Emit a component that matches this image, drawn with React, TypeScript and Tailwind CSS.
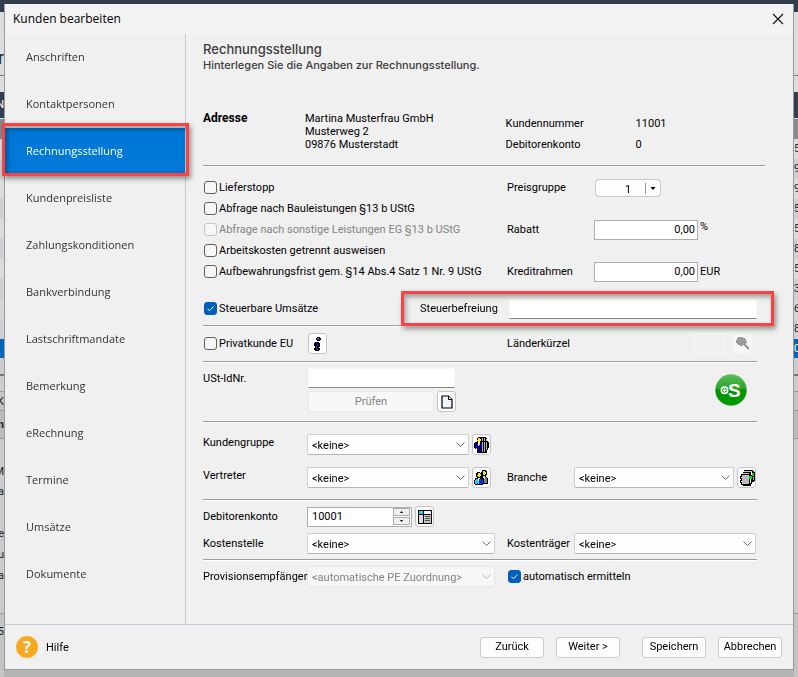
import { useState, type ReactNode } from "react";
import clsx from "clsx";

const navItems = [
    "Anschriften",
    "Kontaktpersonen",
    "Rechnungsstellung",
    "Kundenpreisliste",
    "Zahlungskonditionen",
    "Bankverbindung",
    "Lastschriftmandate",
    "Bemerkung",
    "eRechnung",
    "Termine",
    "Umsätze",
    "Dokumente",
];

const flags = [
    { label: "Lieferstopp" },
    { label: "Abfrage nach Bauleistungen §13 b UStG" },
    { label: "Abfrage nach sonstige Leistungen EG §13 b UStG", disabled: true },
    { label: "Arbeitskosten getrennt ausweisen" },
    { label: "Aufbewahrungsfrist gem. §14 Abs.4 Satz 1 Nr. 9 UStG" },
];

// rows of the list window behind the dialog
const backdropRows = [
    { cls: "h-3 bg-[#323e4d]", left: "", right: "" },
    { cls: "h-16 bg-[#dcdcdc] border-b border-[#777] text-lg leading-[92px]", left: "r", right: "" },
    { cls: "h-4 bg-[#dcdcdc]", left: "", right: "" },
    { cls: "h-[26px] bg-[#323e4d] text-white leading-[26px]", left: "N", right: "" },
    { cls: "h-[21px] bg-[#87888d] border-t border-[#ddd]", left: "", right: "" },
    { cls: "h-5 bg-[#dcdcdc]", left: "", right: "5" },
    { cls: "h-5 bg-[#cfcfd3]", left: "", right: "9" },
    { cls: "h-5 bg-[#dcdcdc]", left: "", right: "9" },
    { cls: "h-5 bg-[#cfcfd3]", left: "", right: "5" },
    { cls: "h-5 bg-[#dcdcdc]", left: "", right: "5" },
    { cls: "h-5 bg-[#cfcfd3]", left: "", right: "8" },
    { cls: "h-5 bg-[#dcdcdc]", left: "", right: "5" },
    { cls: "h-5 bg-[#cfcfd3]", left: "", right: "3" },
    { cls: "h-5 bg-[#d6d6d6]", left: "", right: "6" },
    { cls: "h-5 bg-[#cfcfd3]", left: "", right: "8" },
    { cls: "h-[19px] bg-[#0067b8] text-white", left: "", right: "0" },
    { cls: "h-[18px] bg-[#cdcdcd] border-b-2 border-[#777]", left: "", right: "" },
    { cls: "h-[15px] bg-[#cdcdcd]", left: "", right: "" },
    { cls: "h-5 bg-[#c4c4c4] border-y border-[#999]", left: "K", right: "" },
    { cls: "h-7 bg-[#bcbcbc] border-b border-[#999] leading-7 font-bold", left: "n", right: "" },
    { cls: "h-[23px] bg-[#cbcbcb]", left: "", right: "" },
    { cls: "h-5 bg-[#cbcbcb]", left: "M", right: "" },
    { cls: "h-[42px] bg-[#cbcbcb]", left: "a", right: "" },
    { cls: "h-[21px] bg-[#cbcbcb]", left: "e", right: "" },
    { cls: "h-[21px] bg-[#cbcbcb]", left: "u", right: "" },
    { cls: "h-12 bg-[#cbcbcb] border-b border-[#999]", left: "a", right: "" },
    { cls: "grow bg-[#c4c4c4] leading-9", left: "5", right: "" },
];

function Backdrop({ side }: { side: "left" | "right" }) {
    return (
        <div aria-hidden="true" className="flex w-1 shrink-0 flex-col overflow-hidden text-[11px] leading-5 text-[#222]">
            {backdropRows.map((row, i) => (
                <div key={i} className={clsx("flex shrink-0 overflow-hidden", side === "left" && "justify-end", row.cls)}>
                    {row[side]}
                </div>
            ))}
        </div>
    );
}

function Marker({ className }: { className: string }) {
    return (
        <div
            className={clsx(
                "pointer-events-none absolute border-3 border-[#fb4141] shadow-[2px_3px_5px_rgba(0,0,0,0.4),inset_2px_3px_5px_rgba(0,0,0,0.35)]",
                className
            )}
        />
    );
}

function Separator({ className }: { className?: string }) {
    return <div className={clsx("h-[2px] border-t border-[#9d9d9d] bg-white", className)} />;
}

function Check({ label, disabled, checked }: { label: string; disabled?: boolean; checked?: boolean }) {
    const [on, setOn] = useState(!!checked);
    return (
        <label className={clsx("flex h-[21px] items-center gap-[2px] leading-[19px] whitespace-nowrap", disabled && "text-[#838383]")}>
            <span className="relative flex">
                <input
                    type="checkbox"
                    checked={on}
                    disabled={disabled}
                    onChange={() => setOn(!on)}
                    className="size-[13px] appearance-none rounded-[3px] border border-[#5f5f5f] bg-[#f7f7f7] checked:border-[#005fb8] checked:bg-[#005fb8] disabled:border-[#c3c3c3]"
                />
                {on && (
                    <svg viewBox="0 0 13 13" className="pointer-events-none absolute inset-0 size-[13px]">
                        <path d="M3.5 6.7l2 2 4-4" fill="none" stroke="#fff" strokeWidth="1" />
                    </svg>
                )}
            </span>
            {label}
        </label>
    );
}

function Select({ id, value, disabled, className }: { id: string; value: string; disabled?: boolean; className?: string }) {
    return (
        <div className={clsx("relative min-w-0", className)}>
            <select
                id={id}
                disabled={disabled}
                className="h-[21px] w-full appearance-none rounded-[2px] border border-[#cfcfcf] border-b-[#b5b5b5] bg-[#fdfdfd] pt-[1px] pl-1 text-black disabled:border-[#e6e6e6] disabled:bg-[#f7f7f7] disabled:text-[#838383] disabled:opacity-100"
            >
                <option>{value}</option>
            </select>
            <svg viewBox="0 0 9 5" className="pointer-events-none absolute top-2 right-1 h-[5px] w-[9px]">
                <path d="M.5 .5l4 4 4-4" fill="none" stroke={disabled ? "#b5b5b5" : "#6b6b6b"} strokeWidth="1" />
            </svg>
        </div>
    );
}

function IconButton({ label, disabled, children }: { label: string; disabled?: boolean; children: ReactNode }) {
    return (
        <button
            type="button"
            aria-label={label}
            disabled={disabled}
            className="flex h-[21px] w-[19px] shrink-0 items-center justify-center rounded-[3px] border border-[#c4c4c4] bg-[#fdfdfd] disabled:border-[#f4f4f4] disabled:bg-[#f6f6f6]"
        >
            {children}
        </button>
    );
}

function InfoIcon() {
    return (
        <svg viewBox="0 0 7 14" className="h-[14px] w-[7px]" shapeRendering="crispEdges">
            <path d="M3 0h3v1h1v2h-1v1h-3v-1h-1v-2h1zM1 5h4v1h1v4h-1v1h1v2h-1v1h-4v-1h-1v-2h1v-2h-1v-3h1z" fill="#000" />
            <path d="M3 1h2v2h-2zM2 6h1v1h-1zM3 7h1v2h-1zM2 9h1v3h-1zM3 12h1v1h-1z" fill="#2134d8" />
            <path d="M4 1h1v1h-1z" fill="#2ba7a0" />
        </svg>
    );
}

function PageIcon() {
    return (
        <svg viewBox="0 0 12 14" className="h-[14px] w-3">
            <path d="M1 1h6.500l3.500 3.500v8.500h-10z" fill="#eef4fc" stroke="#000" strokeWidth="1.200" />
            <path d="M7.500 1v3.500h3.500" fill="#fff" stroke="#000" strokeWidth="1" />
        </svg>
    );
}

function SearchIcon() {
    return (
        <svg viewBox="0 0 13 13" className="size-[13px]" fill="#9b9b9b" shapeRendering="crispEdges">
            <path d="M4 0h3v1h2v1h1v2h1v2h-1v2h1v1h1v1h1v3h-1v-1h-1v-1h-1v-1h-1v-1h-1v-1h-1v1h-3v-1h-2v-1h-1v-1h-1v-3h1v-2h1v-1h2z" />
        </svg>
    );
}

function GroupIcon() {
    return (
        <svg viewBox="0 0 15 16" className="h-4 w-[15px]" shapeRendering="crispEdges">
            <path d="M4 0h8v1h1v3h1v1h1v6h-1v2h-1v3h-10v-4h-2v-1h-1v-5h1v-1h2v-4h1z" fill="#000" />
            <path d="M8 1h1v14h-1zM10 1h1v14h-1zM12 2h1v11h-1z" fill="#b4b4b4" />
            <path d="M8 4h5v1h-5z" fill="#000" />
            <path d="M4 1h2v1h1v2h-1v1h-2v-1h-1v-1h1z" fill="#ffee00" />
            <path d="M1 6h7v5h-1v4h-3v-4h-3z" fill="#00008b" />
            <path d="M4 5h2v2h-1v2h-1z" fill="#fff" />
            <path d="M5 6h1v2h-1zM2 11h1v1h-1z" fill="#ffee00" />
        </svg>
    );
}

function PeopleIcon() {
    return (
        <svg viewBox="0 0 15 15" className="size-[15px]" shapeRendering="crispEdges">
            <path d="M8 0h4v1h1v4h-1v2h1v1h1v6h-5v1h-8v-1h-1v-4h1v-2h2v-1h-1v-4h1v-1h3v1h1v-1h1z" fill="#000" />
            <path d="M9 1h2v1h1v2h-1v1h-2zM4 3h2v1h1v2h-1v1h-2v-1h-1v-1h1z" fill="#ffe815" />
            <path d="M10 7h2v1h1v5h-3z" fill="#7c7c7c" />
            <path d="M9 6h2v3h-1z" fill="#ddd" />
            <path d="M2 9h6v1h1v4h-7z" fill="#0b2ee0" />
            <path d="M2 9h2v2h1v3h-1v-1h-1v1h-2v-4h1z" fill="#20d9ee" />
            <path d="M4 8h2v1h-1v2h-1z" fill="#fff" />
        </svg>
    );
}

function BooksIcon() {
    return (
        <svg viewBox="0 0 16 16" className="size-4" shapeRendering="crispEdges">
            <path d="M5 0h9v1h1v1h1v9h-1v1h-2v2h-1v2h-8v-1h-2v-1h-1v-8h1v-2h2v-2h1z" fill="#000" />
            <path d="M5 1h8v1h-8zM4 3h6v1h-6z" fill="#c8c8c8" />
            <path d="M3 5h7v9h-7z" fill="#bdbdbd" />
            <path d="M1 5h1v1h-1zM2 7h1v1h-1zM1 9h1v1h-1zM2 11h1v1h-1zM1 13h1v1h-1z" fill="#fff" />
            <path d="M11 9h1v4h-1zM12 2h1v3h-1z" fill="#fff" />
            <path d="M13 3h2v3h-2zM10 6h3v3h-3z" fill="#00e01a" />
            <path d="M14 7h1v3h-1z" fill="#bbb" />
        </svg>
    );
}

function TableIcon() {
    return (
        <svg viewBox="0 0 14 14" className="size-[14px]" shapeRendering="crispEdges">
            <path d="M0 0h14v14h-14z" fill="#000" />
            <path d="M1 1h4v3h-4z" fill="#14dff0" />
            <path d="M6 1h7v3h-7z" fill="#fff" />
            <path d="M1 5h4v8h-4z" fill="#ddd" />
            <path d="M6 5h7v8h-7z" fill="#c4c4c4" />
            <path d="M7 6h5v1h-5zM7 8h5v1h-5zM7 10h5v1h-5z" fill="#555" />
        </svg>
    );
}

function PlusSIcon() {
    return (
        <svg viewBox="0 0 32 32" className="size-8">
            <defs>
                <linearGradient id="plus-s" x1="0" y1="0" x2="0" y2="1">
                    <stop offset="0" stopColor="#5cbc5c" />
                    <stop offset=".45" stopColor="#2ba52b" />
                    <stop offset=".5" stopColor="#009300" />
                    <stop offset="1" stopColor="#009c00" />
                </linearGradient>
            </defs>
            <circle cx="16" cy="16" r="15.700" fill="url(#plus-s)" />
            <circle cx="9.500" cy="16.300" r="3.200" fill="none" stroke="#fff" strokeWidth="1.500" />
            <path d="M9.500 14.300v4M7.500 16.300h4" stroke="#fff" strokeWidth="1.300" />
            <text x="13" y="22.500" fill="#fff" fontFamily="Liberation Sans, sans-serif" fontWeight="700" fontSize="19">
                S
            </text>
        </svg>
    );
}

const labelCls = "whitespace-nowrap";
const underlined = "border border-[#f7f7f7] border-b-[#858585] bg-white px-1 outline-none";
const boxed = "h-5 border border-[#abadb3] bg-white outline-none";
const footerBtn = "h-[21px] w-16 rounded-[3px] border border-[#cbcbcb] bg-[#fdfdfd] pt-[1px]";
const formGrid = "grid grid-cols-[104px_200fr_67px_182fr]";

function Billing() {
    return (
        <main className="min-w-0 grow pt-[7px] pr-9 pl-[17px]">
            <h1 className="font-[Inter,sans-serif] text-[13px] leading-4 font-medium text-[#3c3c3c]">Rechnungsstellung</h1>
            <p className="font-[Inter,sans-serif] text-[11px] leading-4 font-medium text-[#3c3c3c]">
                Hinterlegen Sie die Angaben zur Rechnungsstellung.
            </p>

            <div className="mt-[39px] grid grid-cols-[102px_200fr_130px_121fr] leading-[13px]">
                <strong className="text-xs leading-[13px]">Adresse</strong>
                <address className="not-italic">
                    Martina Musterfrau GmbH
                    <br />
                    Musterweg 2
                    <br />
                    09876 Musterstadt
                </address>
                <div className="pt-[1px] leading-[21px]">
                    <div>Kundennummer</div>
                    <div>Debitorenkonto</div>
                </div>
                <div className="pt-[1px] leading-[21px]">
                    <div>11001</div>
                    <div>0</div>
                </div>
            </div>

            <Separator className="mt-[10px] -mr-2" />

            <div className="mt-[10px] flex">
                <div className="w-[304px] pl-[1px]">
                    {flags.map((flag) => (
                        <Check key={flag.label} {...flag} />
                    ))}
                </div>
                <div className="flex flex-col gap-[21px] leading-[19px]">
                    <div className="flex h-[21px] items-center">
                        <label htmlFor="preisgruppe" className="w-[88px]">Preisgruppe</label>
                        <div className="relative flex">
                            <select
                                id="preisgruppe"
                                className="h-[18px] w-[66px] appearance-none rounded-[4px] border border-[#c9c9c9] bg-[#fdfdfd] pl-[29px]"
                            >
                                <option>1</option>
                            </select>
                            <svg viewBox="0 0 12 11" className="pointer-events-none absolute top-1 right-1 h-[11px] w-3">
                                <path d="M.5 0v11" stroke="#999" />
                                <path d="M5.500 4h5l-2.500 3z" fill="#000" />
                            </svg>
                        </div>
                    </div>
                    <div className="flex h-[21px] items-center">
                        <label htmlFor="rabatt" className="w-[87px]">Rabatt</label>
                        <input id="rabatt" defaultValue="0,00" className={clsx(boxed, "w-[104px] pr-[2px] text-right")} />
                        <span className="ml-[2px] self-start leading-4">%</span>
                    </div>
                    <div className="flex h-[21px] items-center">
                        <label htmlFor="kredit" className="w-[87px]">Kreditrahmen</label>
                        <input id="kredit" defaultValue="0,00" className={clsx(boxed, "w-[104px] pr-[2px] text-right")} />
                        <span className="ml-[2px]">EUR</span>
                    </div>
                </div>
            </div>

            <div className="mt-4 flex items-center justify-between pl-[1px]">
                <Check label="Steuerbare Umsätze" checked />
                <div className="relative flex items-center">
                    <label htmlFor="befreiung" className="w-[89px] leading-[19px]">Steuerbefreiung</label>
                    <input id="befreiung" className={clsx(underlined, "h-5 w-[248px]")} />
                    <Marker className="-top-2 -right-[17px] -bottom-[7px] -left-[19px] z-10" />
                </div>
            </div>

            <Separator className="mt-[6px]" />

            <div className="mt-[6px] flex items-center pl-[1px] leading-[19px]">
                <div className="w-[104px]">
                    <Check label="Privatkunde EU" />
                </div>
                <IconButton label="Information">
                    <InfoIcon />
                </IconButton>
                <label htmlFor="land" className="ml-[180px]">Länderkürzel</label>
                <div className="ml-auto flex gap-2 pr-[5px]">
                    <input id="land" disabled className="h-[21px] w-[31px] border border-[#fafafa] bg-[#f0f0f0]" />
                    <IconButton label="Suchen" disabled>
                        <SearchIcon />
                    </IconButton>
                </div>
            </div>

            <Separator className="mt-[7px]" />

            <div className="mt-[5px] flex">
                <label htmlFor="ustid" className="w-[105px] leading-[21px]">USt-IdNr.</label>
                <div className="flex w-[148px] flex-col gap-[3px]">
                    <input id="ustid" className={clsx(underlined, "mr-[1px] h-5")} />
                    <div className="flex gap-[3px]">
                        <button
                            type="button"
                            disabled
                            className="h-[21px] grow rounded-[3px] border border-[#e8e8e8] bg-[#f8f8f8] pt-[1px] text-[#838383]"
                        >
                            Prüfen
                        </button>
                        <IconButton label="Neu">
                            <PageIcon />
                        </IconButton>
                    </div>
                </div>
                <button type="button" aria-label="Plus S" className="mt-[6px] mr-[10px] ml-auto h-8">
                    <PlusSIcon />
                </button>
            </div>

            <Separator className="mt-[9px]" />

            <div className={clsx(formGrid, "mt-[11px] gap-y-3 pr-[1px] leading-[17px]")}>
                <label htmlFor="gruppe" className={labelCls}>Kundengruppe</label>
                <div className="col-span-3 flex gap-[3px]">
                    <Select id="gruppe" value="<keine>" className="w-[162px]" />
                    <IconButton label="Kundengruppen">
                        <GroupIcon />
                    </IconButton>
                </div>
                <label htmlFor="vertreter" className={labelCls}>Vertreter</label>
                <div className="flex gap-[3px]">
                    <Select id="vertreter" value="<keine>" className="w-[162px]" />
                    <IconButton label="Vertreter wählen">
                        <PeopleIcon />
                    </IconButton>
                </div>
                <label htmlFor="branche" className="leading-[21px]">Branche</label>
                <div className="flex gap-[3px]">
                    <Select id="branche" value="<keine>" className="grow" />
                    <IconButton label="Branchen">
                        <BooksIcon />
                    </IconButton>
                </div>
            </div>

            <Separator className="mt-[11px]" />

            <div className={clsx(formGrid, "mt-[5px] items-center gap-y-[6px] pr-[1px] leading-[19px]")}>
                <label htmlFor="debitor" className={labelCls}>Debitorenkonto</label>
                <div className="col-span-3 flex items-center gap-[3px]">
                    <div className={clsx(boxed, "flex w-[105px] items-center pr-[1px]")}>
                        <input id="debitor" defaultValue="10001" autoFocus className="w-0 grow pl-1 outline-none" />
                        <span className="flex flex-col gap-[1px]">
                            <button type="button" aria-label="Mehr" className="flex h-2 w-[17px] items-center justify-center border border-[#adadad] bg-[#f0f0f0]">
                                <svg viewBox="0 0 3 2" className="h-[2px] w-[3px]"><path d="M0 2l1.500-2 1.500 2z" /></svg>
                            </button>
                            <button type="button" aria-label="Weniger" className="flex h-2 w-[17px] items-center justify-center border border-[#adadad] bg-[#f0f0f0]">
                                <svg viewBox="0 0 3 2" className="h-[2px] w-[3px]"><path d="M0 0h3l-1.500 2z" /></svg>
                            </button>
                        </span>
                    </div>
                    <IconButton label="Kontenliste">
                        <TableIcon />
                    </IconButton>
                </div>
                <label htmlFor="stelle" className={labelCls}>Kostenstelle</label>
                <Select id="stelle" value="<keine>" className="mr-3" />
                <label htmlFor="traeger" className={labelCls}>Kostenträger</label>
                <Select id="traeger" value="<keine>" />
            </div>

            <Separator className="mt-[5px]" />

            <div className={clsx(formGrid, "mt-[5px] items-center pr-[1px] leading-[19px]")}>
                <label htmlFor="provision" className={clsx(labelCls, "z-10")}>Provisionsempfänger</label>
                <Select id="provision" value="<automatische PE Zuordnung>" disabled className="mr-3" />
                <div className="col-span-2 pl-[1px]">
                    <Check label="automatisch ermitteln" checked />
                </div>
            </div>
        </main>
    );
}

export default function App() {
    return (
        <div className="flex min-h-screen bg-[#b4b4b4] font-[Roboto,sans-serif] text-[11px] text-black">
            <Backdrop side="left" />
            <div className="flex min-w-0 grow flex-col">
                <div className="h-1 bg-[#323e4d]" />
                <div className="flex grow flex-col border-x border-b border-[#9a9a9a] bg-[#f0f0f0]">
                    <header className="flex h-[30px] items-center justify-between bg-[#f3f3f3] pr-[9px] pl-2 font-['Open_Sans',sans-serif] text-xs">
                        <span>Kunden bearbeiten</span>
                        <button type="button" aria-label="Schließen" className="flex">
                            <svg viewBox="0 0 12 12" className="size-3">
                                <path d="M1 1l10 10M11 1l-10 10" stroke="#111" strokeWidth="1.100" />
                            </svg>
                        </button>
                    </header>
                    <div className="flex grow">
                        <nav className="w-[181px] shrink-0 border-r border-[#c5cad6] font-['Open_Sans',sans-serif] text-[#333]">
                            {navItems.map((item) => {
                                const active = item === "Rechnungsstellung";
                                return (
                                    <a
                                        key={item}
                                        href="#"
                                        className={clsx("relative flex h-[47px] items-center pl-[21px]", active && "bg-[#0078d7] text-white")}
                                    >
                                        {item}
                                        {active && <Marker className="-top-[5px] -right-1 -bottom-[1px] -left-[3px] z-10" />}
                                    </a>
                                );
                            })}
                        </nav>
                        <Billing />
                    </div>
                    <footer className="flex h-[45px] items-center border-t border-[#c5cad6] pr-[11px] pl-[10px]">
                        <a href="#" className="flex items-center gap-[7px] leading-[19px]">
                            <svg viewBox="0 0 24 24" className="size-6">
                                <circle cx="12" cy="12" r="11.500" fill="#f7a823" stroke="#fff" strokeWidth=".8" />
                                <text x="12" y="17.500" textAnchor="middle" fill="#fff" fontFamily="Open Sans, sans-serif" fontWeight="700" fontSize="16">
                                    ?
                                </text>
                            </svg>
                            Hilfe
                        </a>
                        <div className="ml-auto flex gap-3">
                            <button type="button" className={footerBtn}>Zurück</button>
                            <button type="button" className={footerBtn}>Weiter &gt;</button>
                            <button type="button" className={clsx(footerBtn, "ml-[10px]")}>Speichern</button>
                            <button type="button" className={footerBtn}>Abbrechen</button>
                        </div>
                    </footer>
                </div>
                <div className="h-[7px] shrink-0 bg-[#b4b4b4]" />
            </div>
            <Backdrop side="right" />
        </div>
    );
}
